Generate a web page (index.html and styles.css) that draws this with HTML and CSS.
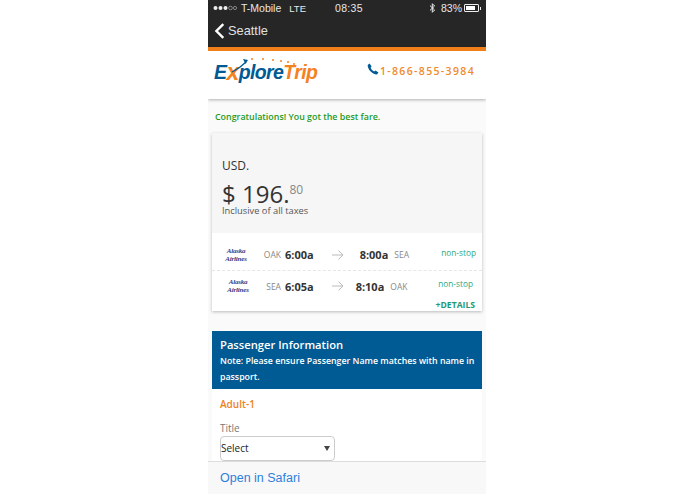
FILE: index.html
```html
<!DOCTYPE html>
<html lang="en">
<head>
    <meta charset="UTF-8">
    <meta name="viewport" content="width=device-width, initial-scale=1.0">
    <title>ExploreTrip</title>
    <link rel="stylesheet" href="styles.css">
</head>
<body>
    <div class="phone">
        <div class="topbar">
            <div class="status">
                <div class="status-left">
                    <svg class="dots" width="24" height="6" viewBox="0 0 24 6">
                        <g fill="#eee"><circle cx="2.500" cy="3" r="2"/><circle cx="7.500" cy="3" r="2"/><circle cx="12.500" cy="3" r="2"/></g>
                        <g fill="none" stroke="#aaa" stroke-width=".7"><circle cx="17.500" cy="3" r="1.800"/><circle cx="22" cy="3" r="1.600"/></g>
                    </svg>
                    <span>T-Mobile</span>
                    <span class="lte">LTE</span>
                </div>
                <div class="status-time">08:35</div>
                <div class="status-right">
                    <svg class="bt" width="7" height="10" viewBox="0 0 7 10"><path d="M1 2.600 5.600 7 3.300 9.300V.7L5.600 3 1 7.400" fill="none" stroke="#eee" stroke-width="1"/></svg>
                    <span>83%</span>
                    <span class="battery"><span class="battery-fill"></span></span>
                    <span class="battery-tip"></span>
                </div>
            </div>
            <div class="nav">
                <svg width="11" height="16" viewBox="0 0 11 16"><path d="M9.300 1.200 2.400 8l6.900 6.800" fill="none" stroke="#fff" stroke-width="2.400"/></svg>
                <span>Seattle</span>
            </div>
        </div>

        <div class="header">
            <div class="logo">
                <svg class="logo-trail" width="66" height="22" viewBox="0 0 66 22">
                    <path d="M1 18C7 15 12 11 15 8" fill="none" stroke="#005a94" stroke-width="1.200"/>
                    <path d="M12 5 17 6 14.500 10Z" fill="#005a94"/>
                    <g fill="#f58220">
                        <circle cx="21" cy="5" r="1"/><circle cx="32" cy="5" r="1"/><circle cx="42" cy="6" r="1"/>
                        <circle cx="50" cy="7" r="1"/><circle cx="57" cy="8" r="1"/><circle cx="63" cy="10" r="1"/>
                    </g>
                </svg>
                <span class="logo-blue">E<span class="logo-x">x</span>plore</span><span class="logo-orange">Trip</span>
            </div>
            <div class="phone-number">
                <svg width="12" height="12" viewBox="0 0 12 12"><path d="M2.600.6 4.600 3.400 3.600 4.800C4.200 6.200 5.600 7.800 7.200 8.600L8.600 7.500 11.400 9.400 10 11.400C5.500 11.600.5 6.500.7 2Z" fill="#005a94"/></svg>
                <span>1-866-855-3984</span>
            </div>
        </div>

        <div class="content">
            <p class="congrats">Congratulations! You got the best fare.</p>

            <div class="fare-card">
                <div class="fare-top">
                    <div class="currency">USD.</div>
                    <div class="price">$ 196.<sup>80</sup></div>
                    <div class="taxes">Inclusive of all taxes</div>
                </div>
                <div class="leg leg-first">
                    <div class="airline">Alaska<br>Airlines</div>
                    <div class="airport from">OAK</div>
                    <div class="time">6:00a</div>
                    <svg class="arrow" width="12" height="10" viewBox="0 0 12 10"><path d="M0 5h11M6.500.6 11 5l-4.500 4.400" fill="none" stroke="#bbb" stroke-width="1"/></svg>
                    <div class="time arrive">8:00a</div>
                    <div class="airport to">SEA</div>
                    <div class="stops">non-stop</div>
                </div>
                <div class="leg leg-second">
                    <div class="airline">Alaska<br>Airlines</div>
                    <div class="airport from">SEA</div>
                    <div class="time">6:05a</div>
                    <svg class="arrow" width="12" height="10" viewBox="0 0 12 10"><path d="M0 5h11M6.500.6 11 5l-4.500 4.400" fill="none" stroke="#bbb" stroke-width="1"/></svg>
                    <div class="time arrive">8:10a</div>
                    <div class="airport to">OAK</div>
                    <div class="stops">non-stop</div>
                </div>
                <div class="details">+DETAILS</div>
            </div>

            <div class="passenger">
                <div class="passenger-head">
                    <div class="passenger-title">Passenger Information</div>
                    <div class="passenger-note">Note: Please ensure Passenger Name matches with name in passport.</div>
                </div>
                <div class="passenger-body">
                    <div class="adult">Adult-1</div>
                    <div class="field-label">Title</div>
                    <div class="select">Select<span class="caret"></span></div>
                </div>
            </div>
        </div>

        <div class="safari-bar">Open in Safari</div>
    </div>
</body>
</html>
```

FILE: styles.css
```css
* {
    box-sizing: border-box;
}
body {
    margin: 0;
    background: #fff;
    font-family: "Open Sans", sans-serif;
}
.phone {
    width: 278px;
    height: 494px;
    margin: 0 0 0 208px;
    display: flex;
    flex-direction: column;
    overflow: hidden;
    background: #fafafa;
}
.topbar {
    background: #262626;
    color: #e8e8e8;
    font-family: "Liberation Sans", sans-serif;
    height: 47px;
    flex: none;
}
.status {
    height: 16px;
    padding: 0 5px 0 5px;
    display: flex;
    align-items: center;
    justify-content: space-between;
    font-size: 10.500px;
    position: relative;
}
.status-left {
    display: flex;
    align-items: center;
    gap: 4px;
}
.lte {
    margin-left: 4px;
    font-size: 9.500px;
}
.status-time {
    position: absolute;
    left: 127px;
    letter-spacing: 0.3px;
}
.status-right {
    display: flex;
    align-items: center;
    gap: 2px;
}
.bt {
    margin-right: 3px;
}
.battery {
    width: 15px;
    height: 8px;
    border: 1px solid #eee;
    border-radius: 1px;
    padding: 1px;
    display: block;
}
.battery-fill {
    display: block;
    height: 100%;
    width: 85%;
    background: #fff;
}
.battery-tip {
    width: 1px;
    height: 3px;
    background: #eee;
    margin-left: -1px;
}
.nav {
    height: 29px;
    padding: 0 0 0 6px;
    display: flex;
    align-items: center;
    gap: 3px;
    font-size: 12.800px;
    color: #e0e0e0;
}
.header {
    flex: none;
    height: 52px;
    background: #fff;
    border-top: 4px solid #f07f1a;
    box-shadow: 0 1px 3px rgba(0, 0, 0, 0.3);
    display: flex;
    justify-content: space-between;
    padding: 0 11px 0 6px;
    position: relative;
}
.logo {
    margin-top: 9px;
    font-family: "Liberation Sans", sans-serif;
    font-weight: bold;
    font-style: italic;
    font-size: 19.500px;
    letter-spacing: -0.6px;
    position: relative;
    line-height: 24px;
}
.logo-trail {
    position: absolute;
    left: 17px;
    top: -6px;
}
.logo-blue {
    color: #005a94;
}
.logo-x {
    color: #f58220;
    font-size: 23px;
    vertical-align: -1px;
}
.logo-orange {
    color: #f58220;
}
.phone-number {
    margin-top: 12px;
    display: flex;
    align-items: flex-start;
    gap: 1px;
    color: #f08a2c;
    font-size: 10.500px;
    font-weight: 600;
    letter-spacing: 1.350px;
    line-height: 16px;
}
.content {
    flex: 1;
    min-height: 0;
    overflow: hidden;
    padding: 0 4px;
}
.congrats {
    margin: 11px 0 0 3px;
    font-size: 8.900px;
    font-weight: 600;
    line-height: 14px;
    color: #1f9a1f;
}
.fare-card {
    margin-top: 9px;
    height: 178px;
    background: #fff;
    box-shadow: 0 1px 3px rgba(0, 0, 0, 0.25);
    display: flex;
    flex-direction: column;
}
.fare-top {
    height: 100px;
    flex: none;
    background: #f6f6f6;
    padding: 25px 0 0 10px;
    color: #333;
}
.currency {
    font-size: 12px;
    line-height: 16px;
}
.price {
    margin-top: 8px;
    font-size: 24px;
    line-height: 23px;
}
.price sup {
    font-size: 12px;
    color: #888;
    line-height: 0;
    vertical-align: 9px;
}
.taxes {
    font-size: 9.300px;
    line-height: 11px;
    color: #555;
}
.leg {
    flex: none;
    display: flex;
    align-items: center;
    position: relative;
}
.leg-first {
    height: 38px;
    padding-top: 6px;
    border-bottom: 1px dashed #e6e6e6;
}
.leg-second {
    height: 30px;
}
.airline {
    font-family: "Liberation Serif", serif;
    font-style: italic;
    font-weight: bold;
    font-size: 7px;
    line-height: 8px;
    color: #3c3c80;
    width: 24px;
    margin-left: 12px;
    text-align: center;
    letter-spacing: -0.2px;
}
.leg-second .airline {
    margin-left: 14px;
    margin-right: -2px;
}
.airport {
    font-size: 8.500px;
    color: #888;
}
.from {
    width: 37px;
    padding-right: 4px;
    text-align: right;
    flex: none;
}
.time {
    font-size: 11px;
    font-weight: 700;
    color: #333;
}
.arrow {
    margin: 0 16px 0 18px;
}
.leg-second .arrow {
    margin-right: 12px;
}
.to {
    margin-left: 6px;
}
.stops {
    position: absolute;
    right: 6px;
    top: 14px;
    font-size: 8.300px;
    line-height: 12px;
    color: #2ea885;
}
.leg-second .stops {
    right: 9px;
    top: 7px;
}
.details {
    text-align: right;
    padding-right: 7px;
    font-size: 8.600px;
    font-weight: 700;
    color: #1f9a78;
    line-height: 10px;
    margin-top: -1px;
}
.passenger {
    margin-top: 20px;
    background: #fff;
}
.passenger-head {
    background: #005a94;
    color: #fff;
    padding: 5px 3px 0 8px;
    height: 58px;
}
.passenger-title {
    font-size: 11.200px;
    font-weight: 600;
    line-height: 17px;
}
.passenger-note {
    font-size: 8.800px;
    font-weight: 600;
    line-height: 16px;
}
.passenger-body {
    padding: 8px 8px 0;
}
.adult {
    font-size: 10px;
    font-weight: 600;
    line-height: 15px;
    color: #f07f1a;
}
.field-label {
    margin-top: 9px;
    font-size: 10px;
    line-height: 15px;
    color: #777;
}
.select {
    width: 115px;
    height: 25px;
    border: 1px solid #ccc;
    border-radius: 4px;
    background: #fff;
    font-size: 10px;
    line-height: 23px;
    color: #222;
    position: relative;
}
.caret {
    position: absolute;
    right: 4px;
    top: 9px;
    border: 3px solid transparent;
    border-top: 5px solid #444;
    border-bottom: 0;
}
.safari-bar {
    flex: none;
    height: 33px;
    background: #f8f8f8;
    border-top: 1px solid #ddd;
    padding-left: 12px;
    font-family: "Liberation Sans", sans-serif;
    font-size: 12.500px;
    line-height: 32px;
    color: #2f7fdc;
    position: relative;
}
```
